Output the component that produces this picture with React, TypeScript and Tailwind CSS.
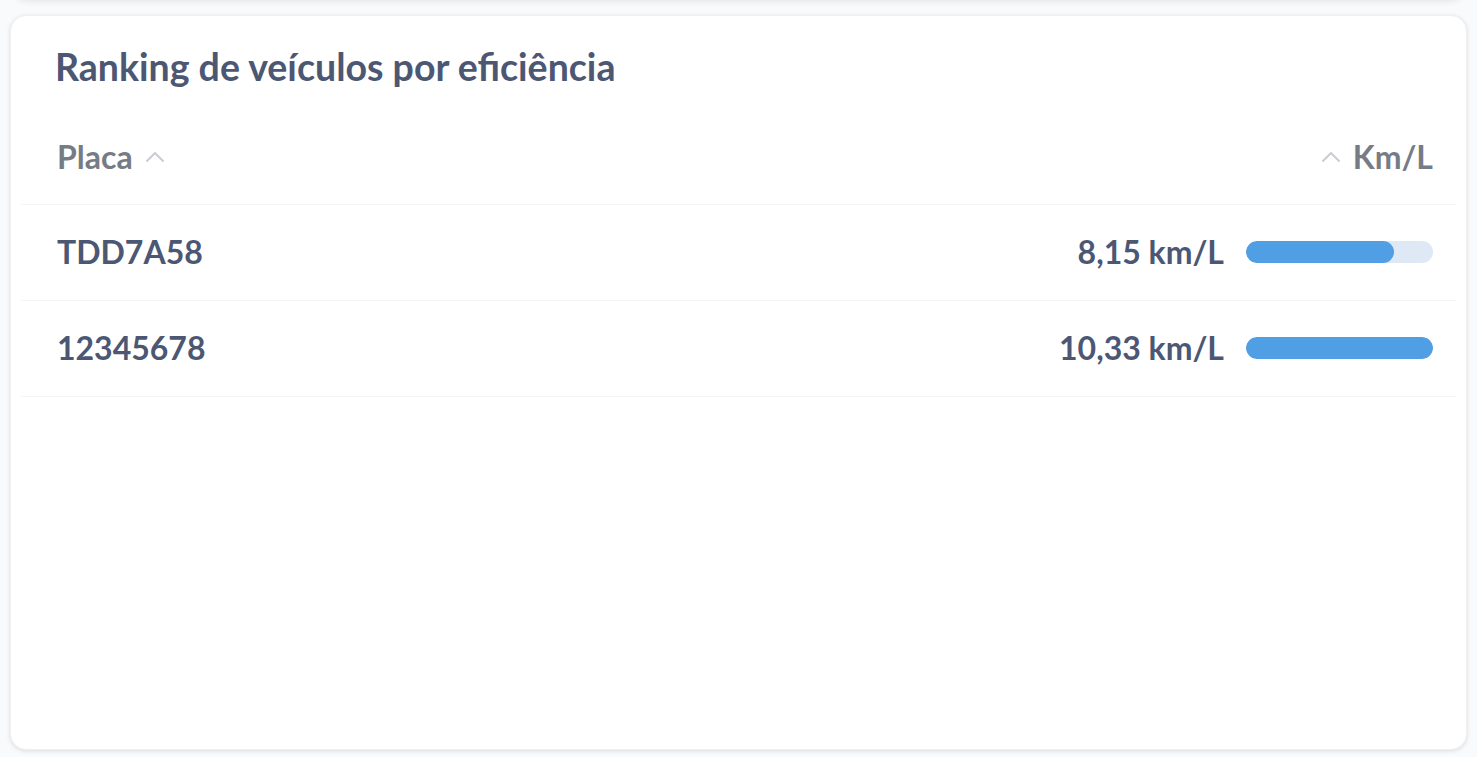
type Row = { placa: string; kml: number };

const rows: Row[] = [
  { placa: "TDD7A58", kml: 8.15 },
  { placa: "12345678", kml: 10.33 },
];

const max = 10.33;

function fmt(v: number) {
  return v.toFixed(2).replace(".", ",") + " km/L";
}

function SortUp() {
  return (
    <svg width="20" height="12" viewBox="0 0 20 12" fill="none" className="text-[#c9cdd3]">
      <polyline
        points="2,10 10,2 18,10"
        stroke="currentColor"
        strokeWidth="2"
        strokeLinecap="round"
        strokeLinejoin="round"
      />
    </svg>
  );
}

export default function App() {
  return (
    <div
      className="h-[757px] w-full overflow-hidden bg-[#f9fafb] flex flex-col"
      style={{ fontFamily: "Lato, 'Open Sans', sans-serif" }}
    >
      {/* bottom edge of the card above */}
      <div className="mx-[12px] -mt-[20px] h-[20px] rounded-b-2xl bg-white shadow-[0_2px_6px_rgba(0,0,0,0.08)]" />

      <div className="mx-[10px] mt-[15px] mb-[7px] flex-1 rounded-2xl bg-white shadow-[0_1px_4px_rgba(0,0,0,0.12)] border border-[#f0f0f0] flex flex-col">
        <h2 className="pl-[44px] pt-[32px] text-[37.5px] font-bold leading-none text-[#4c5773]">
          Ranking de veículos por eficiência
        </h2>

        <div className="mt-[25px] px-[10px]">
          <div className="flex h-[94px] items-center justify-between border-b border-[#f4f5f6] pl-[36px] pr-[23px] text-[32px] font-bold text-[#767c86]">
            <div className="flex items-center gap-[12px]">
              <span>Placa</span>
              <SortUp />
            </div>
            <div className="flex items-center gap-[12px]">
              <SortUp />
              <span>Km/L</span>
            </div>
          </div>

          {rows.map((r) => (
            <div
              key={r.placa}
              className="flex h-[96px] items-center justify-between border-b border-[#f4f5f6] pl-[36px] pr-[23px] text-[32px] font-bold text-[#4c5773]"
            >
              <span>{r.placa}</span>
              <div className="flex items-center gap-[22px]">
                <span>{fmt(r.kml)}</span>
                <div className="h-[22px] w-[187px] overflow-hidden rounded-full bg-[#dfe9f6]">
                  <div
                    className="h-full rounded-full bg-[#509ee3]"
                    style={{ width: `${(r.kml / max) * 100}%` }}
                  />
                </div>
              </div>
            </div>
          ))}
        </div>
      </div>
    </div>
  );
}
